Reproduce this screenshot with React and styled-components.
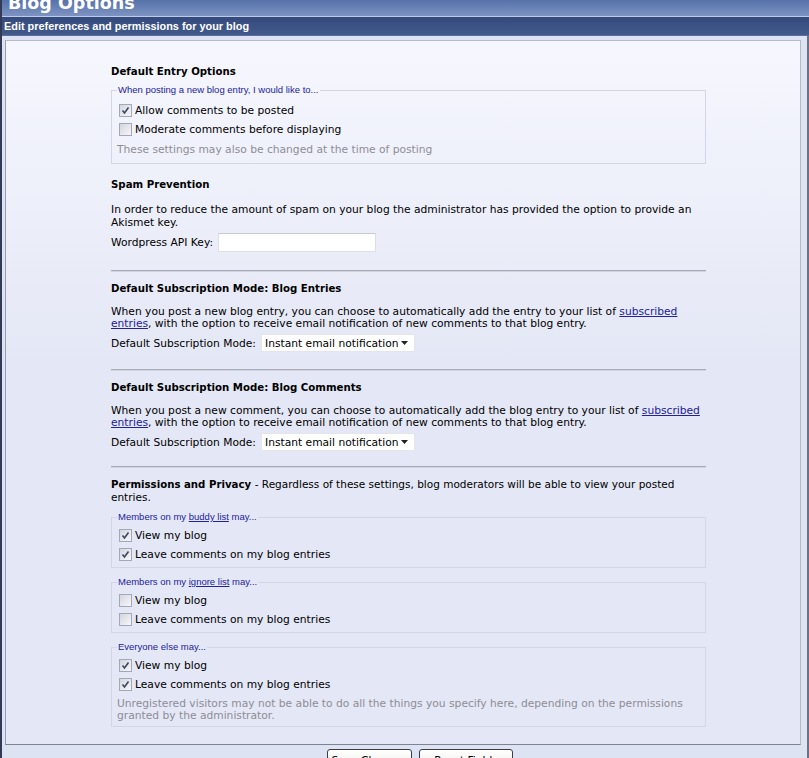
import React from "react"
import styled, { createGlobalStyle } from "styled-components"

const GlobalStyle = createGlobalStyle`
  html, body {
    margin: 0;
    padding: 0;
    background: #ffffff;
    overflow: hidden;
  }
`

const Frame = styled.div`
  width: 809px;
  height: 758px;
  box-sizing: border-box;
  border-left: 2px solid #323a55;
  overflow: hidden;
  font-family: "DejaVu Sans", Verdana, sans-serif;
  font-size: 10.7px;
  color: #000000;
`

const TitleBar = styled.div`
  height: 16px;
  overflow: hidden;
  padding-left: 6px;
  background: linear-gradient(to bottom, #5672a9, #7d93c2);
  border-bottom: 1px solid #bccbe6;
  color: #ffffff;
  font-weight: bold;
  font-size: 17.5px;
  line-height: 6px;
`

const SubHeader = styled.div`
  height: 18px;
  padding-left: 2px;
  background: linear-gradient(to bottom, #344a7c, #435a8c);
  border-bottom: 1px solid #5b6e98;
  color: #ffffff;
  font-family: "Liberation Sans", Arial, sans-serif;
  font-weight: bold;
  font-size: 10.9px;
  line-height: 18px;
`

const Surround = styled.div`
  background: #dde3f2;
  border-right: 2px solid #6c7184;
  padding: 4px 6px 0 3px;
  height: 720px;
`

const Panel = styled.div`
  height: 705px;
  box-sizing: border-box;
  border: 1px solid #b5b9c8;
  border-bottom-color: #7f8392;
  border-left-color: #9a9eac;
  background: linear-gradient(to bottom, #f6f7fe 0px, #e4e7f5 320px);
  padding: 25px 0 0 105px;
  overflow: hidden;
`

const Content = styled.div`
  width: 595px;
  display: flex;
  flex-direction: column;
`

const SectionTitle = styled.div`
  font-weight: bold;
  font-size: 10.2px;
  line-height: 12px;
  margin-top: ${(p) => p.$top || 0}px;
  margin-bottom: ${(p) => p.$gap || 11}px;
`

const Light = styled.span`
  font-weight: normal;
  font-size: 10.5px;
  line-height: 12px;
`

const Text = styled.div`
  line-height: ${(p) => p.$lh || 12}px;
`

const Link = styled.a`
  color: #22229c;
  text-decoration: underline;
`

const Fieldset = styled.fieldset`
  margin: ${(p) => p.$top || 0}px 0 0 0;
  padding: ${(p) => p.$pt || 3}px 0 ${(p) => p.$bottom || 3}px 5px;
  border: 1px solid #d3d6e3;
  min-width: 0;
`

const Legend = styled.legend`
  padding: 0 1px;
  color: #22229c;
  font-family: "Liberation Sans", Tahoma, sans-serif;
  font-size: 9.5px;
  line-height: 12px;
`

const CheckRow = styled.label`
  display: flex;
  align-items: center;
  gap: 3px;
  height: 19px;
  margin-left: 2px;
`

const Box = styled.span`
  width: 11px;
  height: 11px;
  border: 1px solid #a3a8b8;
  background: linear-gradient(135deg, #d4d6de, #f7f7f9);
  display: flex;
  align-items: center;
  justify-content: center;
`

const Note = styled.div`
  color: #8d8d95;
  line-height: 12px;
  margin-top: ${(p) => p.$top || 4}px;
`

const FieldRow = styled.div`
  display: flex;
  align-items: center;
  gap: 5px;
  height: 20px;
  margin-top: ${(p) => p.$top || 3}px;
`

const TextInput = styled.input`
  width: 158px;
  height: 19px;
  box-sizing: border-box;
  border: 1px solid #dedfe6;
  border-top-color: #c9cbd4;
  background: #ffffff;
  padding: 0 3px;
  font: inherit;
`

const SelectWrap = styled.div`
  display: flex;
  align-items: center;
  width: 154px;
  height: 18px;
  box-sizing: border-box;
  border: 1px solid #e4e5ec;
  background: #ffffff;
`

const Select = styled.select`
  appearance: none;
  flex: 1;
  min-width: 0;
  border: none;
  background: transparent;
  font: inherit;
  padding: 0 0 0 3px;
  color: #000000;
  outline: none;
`

const Arrow = styled.svg`
  margin: 0 6px 0 2px;
  flex-shrink: 0;
`

const Divider = styled.div`
  border-top: 1px solid #a7aab7;
  border-bottom: 1px solid #d2d5e1;
  margin: ${(p) => p.$top || 16}px 0 ${(p) => p.$after || 11}px 0;
`

const Footer = styled.div`
  display: flex;
  justify-content: center;
  gap: 7px;
  padding: 4px 0 0 34px;
`

const Button = styled.button`
  width: ${(p) => p.$w}px;
  height: 22px;
  border: 1px solid #3a3d48;
  border-radius: 3px;
  background: linear-gradient(to bottom, #ffffff, #ecebe6);
  font-family: "DejaVu Sans", Verdana, sans-serif;
  font-size: 10.7px;
  padding: 0;
`

function Check({ checked, children }) {
  return (
    <CheckRow>
      <Box>
        {checked && (
          <svg width="9" height="9" viewBox="0 0 9 9">
            <path d="M1.5 4.5 L3.5 7 L7.5 1.5" fill="none" stroke="#3a4663" strokeWidth="1.6" />
          </svg>
        )}
      </Box>
      {children}
    </CheckRow>
  )
}

function ModeSelect() {
  return (
    <FieldRow>
      Default Subscription Mode:
      <SelectWrap>
        <Select defaultValue="instant">
          <option value="instant">Instant email notification</option>
        </Select>
        <Arrow width="7" height="4" viewBox="0 0 7 4">
          <path d="M0 0 L7 0 L3.5 4 Z" fill="#222222" />
        </Arrow>
      </SelectWrap>
    </FieldRow>
  )
}

export default function App() {
  return (
    <>
      <GlobalStyle />
      <Frame>
        <TitleBar>Blog Options</TitleBar>
        <SubHeader>Edit preferences and permissions for your blog</SubHeader>
        <Surround>
          <Panel>
            <Content>
              <SectionTitle $gap={6}>Default Entry Options</SectionTitle>
              <Fieldset $pt={5} $bottom={7}>
                <Legend>When posting a new blog entry, I would like to...</Legend>
                <Check checked>Allow comments to be posted</Check>
                <Check>Moderate comments before displaying</Check>
                <Note $top={5}>These settings may also be changed at the time of posting</Note>
              </Fieldset>

              <SectionTitle $top={15} $gap={12}>Spam Prevention</SectionTitle>
              <Text $lh={13}>
                In order to reduce the amount of spam on your blog the administrator has provided the option to provide an
                Akismet key.
              </Text>
              <FieldRow>
                Wordpress API Key:
                <TextInput type="text" />
              </FieldRow>
              <Divider $top={18} />

              <SectionTitle>Default Subscription Mode: Blog Entries</SectionTitle>
              <Text>
                When you post a new blog entry, you can choose to automatically add the entry to your list of{" "}
                <Link href="#">subscribed entries</Link>, with the option to receive email notification of new comments to
                that blog entry.
              </Text>
              <ModeSelect />
              <Divider />

              <SectionTitle>Default Subscription Mode: Blog Comments</SectionTitle>
              <Text>
                When you post a new comment, you can choose to automatically add the blog entry to your list of{" "}
                <Link href="#">subscribed entries</Link>, with the option to receive email notification of new comments to
                that blog entry.
              </Text>
              <ModeSelect />
              <Divider $top={14} $after={10} />

              <SectionTitle $gap={7}>
                Permissions and Privacy{" "}
                <Light>- Regardless of these settings, blog moderators will be able to view your posted entries.</Light>
              </SectionTitle>
              <Fieldset>
                <Legend>
                  Members on my <Link href="#">buddy list</Link> may...
                </Legend>
                <Check checked>View my blog</Check>
                <Check checked>Leave comments on my blog entries</Check>
              </Fieldset>
              <Fieldset $top={8}>
                <Legend>
                  Members on my <Link href="#">ignore list</Link> may...
                </Legend>
                <Check>View my blog</Check>
                <Check>Leave comments on my blog entries</Check>
              </Fieldset>
              <Fieldset $top={8} $bottom={4}>
                <Legend>Everyone else may...</Legend>
                <Check checked>View my blog</Check>
                <Check checked>Leave comments on my blog entries</Check>
                <Note $top={4}>
                  Unregistered visitors may not be able to do all the things you specify here, depending on the permissions
                  granted by the administrator.
                </Note>
              </Fieldset>
            </Content>
          </Panel>
          <Footer>
            <Button $w={85}>Save Changes</Button>
            <Button $w={94}>Reset Fields</Button>
          </Footer>
        </Surround>
      </Frame>
    </>
  )
}
